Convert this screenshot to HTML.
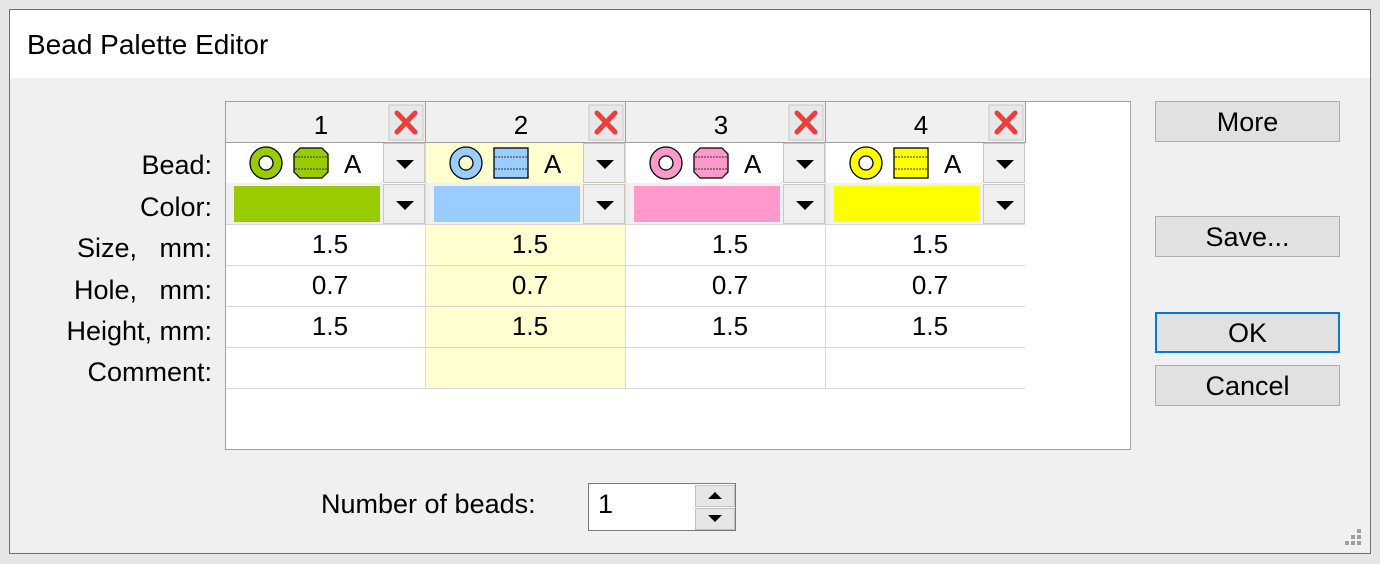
<!DOCTYPE html>
<html><head><style>
body{margin:0;width:1380px;height:564px;background:#e6e6e6;font-family:"Liberation Sans",sans-serif;position:relative;overflow:hidden}
.a{position:absolute}
.win{left:9px;top:9px;width:1360px;height:543px;border:1px solid #6e6e6e;background:#f0f0f0}
.title{left:10px;top:10px;width:1360px;height:68px;background:#fff}
.t{font-size:28px;color:#000}
.lbl{width:200px;text-align:right;font-size:27px;left:12px;white-space:nowrap}
.tbl{left:225px;top:101px;width:904px;height:347px;background:#fff;border:1px solid #a0a0a0}
.cell{font-size:26px;text-align:center}
.hdr{background:#f0f0f0;border-right:1px solid #a0a0a0;border-bottom:1px solid #a0a0a0}
.dd{background:#f0f0f0;border:1px solid #c8c8c8;box-sizing:border-box}
.tri{position:absolute;left:12px;top:16px;width:0;height:0;border-left:9px solid transparent;border-right:9px solid transparent;border-top:9px solid #000}
.btn{left:1155px;width:185px;height:41px;background:#e1e1e1;border:1px solid #adadad;box-sizing:border-box;font-size:27px;text-align:center;line-height:39px}
.hl{height:1px;background:#d8d8d8}
.vl{width:1px;background:#d8d8d8}
</style></head><body>
<div class="a win"></div>
<div class="a title"></div>
<div class="a t" style="left:27px;top:29px">Bead Palette Editor</div>

<div class="a lbl" style="top:150px">Bead:</div>
<div class="a lbl" style="top:192px">Color:</div>
<div class="a lbl" style="top:233px">Size,&nbsp;&nbsp;&nbsp;mm:</div>
<div class="a lbl" style="top:275px">Hole,&nbsp;&nbsp;&nbsp;mm:</div>
<div class="a lbl" style="top:316px">Height, mm:</div>
<div class="a lbl" style="top:357px">Comment:</div>

<div class="a tbl"></div>
<div class="a" style="left:426px;top:143px;width:199px;height:245px;background:#ffffd0"></div>
<div class="a hl" style="left:226px;top:265px;width:799px"></div>
<div class="a hl" style="left:226px;top:306px;width:799px"></div>
<div class="a hl" style="left:226px;top:347px;width:799px"></div>
<div class="a hl" style="left:226px;top:388px;width:799px"></div>
<div class="a hl" style="left:226px;top:224px;width:799px"></div>
<div class="a vl" style="left:425px;top:143px;height:246px"></div>
<div class="a vl" style="left:625px;top:143px;height:246px"></div>
<div class="a vl" style="left:825px;top:143px;height:246px"></div>

<div class="a hdr" style="left:226px;top:102px;width:199px;height:40px"></div>
<div class="a hdr" style="left:426px;top:102px;width:199px;height:40px"></div>
<div class="a hdr" style="left:626px;top:102px;width:199px;height:40px"></div>
<div class="a hdr" style="left:826px;top:102px;width:199px;height:40px"></div>

<svg class="a" style="left:0;top:0" width="1380" height="564">
<defs>
<g id="x"><rect x="0" y="0" width="34" height="35" fill="#e8e8e8" stroke="#c8c8c8"/><path d="M8 8 L26 27 M26 8 L8 27" stroke="#e8403a" stroke-width="5" stroke-linecap="round"/></g>
</defs>
<use href="#x" x="389" y="105"/><use href="#x" x="589" y="105"/><use href="#x" x="789" y="105"/><use href="#x" x="989" y="105"/>
<g stroke="#000" stroke-width="1.3">
<circle cx="266" cy="163" r="16" fill="#99cc00"/><circle cx="266" cy="163" r="7" fill="#fff"/>
<path d="M300 148 H322 L328 154 V172 L322 178 H300 L294 172 V154Z" fill="#99cc00"/>
<circle cx="466" cy="163" r="16" fill="#99ccff"/><circle cx="466" cy="163" r="7" fill="#ffffd0"/>
<rect x="494" y="148" width="34" height="30" fill="#99ccff"/>
<circle cx="666" cy="163" r="16" fill="#ff99cc"/><circle cx="666" cy="163" r="7" fill="#fff"/>
<path d="M700 148 H722 L728 154 V172 L722 178 H700 L694 172 V154Z" fill="#ff99cc"/>
<circle cx="866" cy="163" r="16" fill="#ffff00"/><circle cx="866" cy="163" r="7" fill="#fff"/>
<rect x="894" y="148" width="34" height="30" fill="#ffff00"/>
</g>
<g stroke="#333" stroke-width="1" stroke-dasharray="2,1">
<path d="M295 157 H327 M295 169 H327 M495 157 H527 M495 169 H527 M695 157 H727 M695 169 H727 M895 157 H927 M895 169 H927"/>
</g>
<g fill="#a0a0a0"><rect x="1357" y="529" width="4" height="4"/><rect x="1351" y="535" width="4" height="4"/><rect x="1357" y="535" width="4" height="4"/><rect x="1345" y="541" width="4" height="4"/><rect x="1351" y="541" width="4" height="4"/><rect x="1357" y="541" width="4" height="4"/></g>
</svg>

<div class="a cell" style="left:226px;top:110px;width:190px">1</div>
<div class="a cell" style="left:426px;top:110px;width:190px">2</div>
<div class="a cell" style="left:626px;top:110px;width:190px">3</div>
<div class="a cell" style="left:826px;top:110px;width:190px">4</div>

<div class="a cell" style="left:344px;top:149px">A</div>
<div class="a cell" style="left:544px;top:149px">A</div>
<div class="a cell" style="left:744px;top:149px">A</div>
<div class="a cell" style="left:944px;top:149px">A</div>

<div class="a dd" style="left:383px;top:143px;width:42px;height:40px"><div class="tri"></div></div>
<div class="a dd" style="left:383px;top:184px;width:42px;height:40px"><div class="tri"></div></div>
<div class="a dd" style="left:583px;top:143px;width:42px;height:40px"><div class="tri"></div></div>
<div class="a dd" style="left:583px;top:184px;width:42px;height:40px"><div class="tri"></div></div>
<div class="a dd" style="left:783px;top:143px;width:42px;height:40px"><div class="tri"></div></div>
<div class="a dd" style="left:783px;top:184px;width:42px;height:40px"><div class="tri"></div></div>
<div class="a dd" style="left:983px;top:143px;width:42px;height:40px"><div class="tri"></div></div>
<div class="a dd" style="left:983px;top:184px;width:42px;height:40px"><div class="tri"></div></div>

<div class="a" style="left:226px;top:183px;width:157px;height:41px;background:#f0f0f0"></div>
<div class="a" style="left:426px;top:183px;width:157px;height:41px;background:#f0f0f0"></div>
<div class="a" style="left:626px;top:183px;width:157px;height:41px;background:#f0f0f0"></div>
<div class="a" style="left:826px;top:183px;width:157px;height:41px;background:#f0f0f0"></div>
<div class="a" style="left:234px;top:186px;width:146px;height:36px;background:#99cc00"></div>
<div class="a" style="left:434px;top:186px;width:146px;height:36px;background:#99ccff"></div>
<div class="a" style="left:634px;top:186px;width:146px;height:36px;background:#ff99cc"></div>
<div class="a" style="left:834px;top:186px;width:146px;height:36px;background:#ffff00"></div>

<div class="a cell" style="left:230px;top:229px;width:200px">1.5</div>
<div class="a cell" style="left:430px;top:229px;width:200px">1.5</div>
<div class="a cell" style="left:630px;top:229px;width:200px">1.5</div>
<div class="a cell" style="left:830px;top:229px;width:200px">1.5</div>
<div class="a cell" style="left:230px;top:270px;width:200px">0.7</div>
<div class="a cell" style="left:430px;top:270px;width:200px">0.7</div>
<div class="a cell" style="left:630px;top:270px;width:200px">0.7</div>
<div class="a cell" style="left:830px;top:270px;width:200px">0.7</div>
<div class="a cell" style="left:230px;top:311px;width:200px">1.5</div>
<div class="a cell" style="left:430px;top:311px;width:200px">1.5</div>
<div class="a cell" style="left:630px;top:311px;width:200px">1.5</div>
<div class="a cell" style="left:830px;top:311px;width:200px">1.5</div>

<div class="a btn" style="top:101px;line-height:41px">More</div>
<div class="a btn" style="top:216px;line-height:41px">Save...</div>
<div class="a btn" style="top:312px;border:2px solid #0078d7;line-height:39px">OK</div>
<div class="a btn" style="top:365px;line-height:41px">Cancel</div>

<div class="a" style="left:321px;top:489px;font-size:27px;white-space:nowrap">Number of beads:</div>
<div class="a" style="left:588px;top:483px;width:148px;height:48px;background:#fff;border:1px solid #7a7a7a;box-sizing:border-box"></div>
<div class="a" style="left:598px;top:489px;font-size:27px">1</div>
<div class="a" style="left:695px;top:485px;width:40px;height:22px;background:#e6e6e6;border:1px solid #c0c0c0;box-sizing:border-box"></div>
<div class="a" style="left:695px;top:508px;width:40px;height:22px;background:#e6e6e6;border:1px solid #c0c0c0;box-sizing:border-box"></div>
<div class="a" style="left:708px;top:492px;border-left:7px solid transparent;border-right:7px solid transparent;border-bottom:7px solid #000"></div>
<div class="a" style="left:708px;top:515px;border-left:7px solid transparent;border-right:7px solid transparent;border-top:7px solid #000"></div>
</body></html>
